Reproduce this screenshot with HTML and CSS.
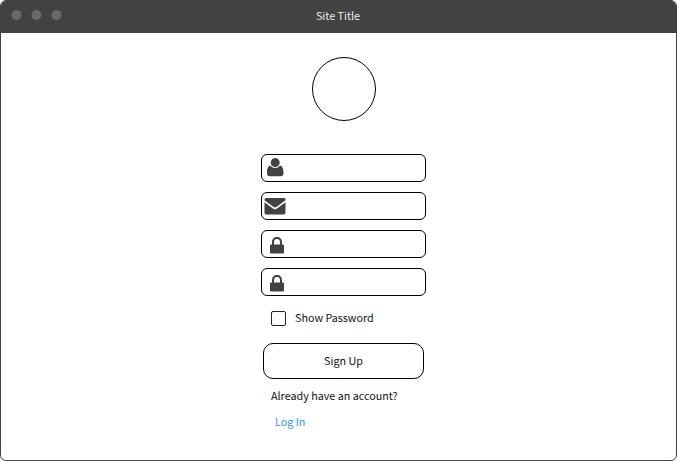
FILE: index.html
```html
<!DOCTYPE html>
<html lang="en">
<head>
<meta charset="utf-8">
<title>Site Title</title>
<link rel="stylesheet" href="styles.css">
</head>
<body>
<div class="window">
  <header class="titlebar">
    <svg class="dots" viewBox="0 0 70 32"><circle cx="15.5" cy="14" r="5"/><circle cx="35.5" cy="14" r="5"/><circle cx="55.5" cy="14" r="5"/></svg>
    <h1>Site Title</h1>
  </header>
  <main class="form">
    <div class="avatar"></div>
    <div class="field"><svg class="user" viewBox="0 0 17 19"><circle cx="8.2" cy="4.6" r="4.5"/><path d="M3.7 7.6Q8.2 12.1 12.7 7.6C15.6 7.9 16.5 11 16.5 15.2Q16.5 18.2 13.8 18.2H2.7Q0 18.2 0 15.2C0 11 .8 7.9 3.7 7.6Z"/><path class="gap" d="M3.3 7.4Q8.2 12.1 13.1 7.4"/></svg></div>
    <div class="field"><svg class="mail" viewBox="0 0 22 17"><path d="M2 0H20Q21.5 0 21.5 1.5V2.3L12.4 8.9Q11 9.8 9.6 8.9L.5 2.3V1.5Q.5 0 2 0ZM.5 4.3 9.3 10.7Q11 11.8 12.7 10.7L21.5 4.3V14.7Q21.5 16.5 19.7 16.5H2.3Q.5 16.5 .5 14.7Z"/></svg></div>
    <div class="field"><svg class="lock" viewBox="0 0 14 17"><path d="M1 7.5H2V5.2C2 2 4 0 7 0S12 2 12 5.2V7.5H13Q14 7.5 14 8.5V15.5Q14 16.5 13 16.5H1Q0 16.5 0 15.5V8.5Q0 7.5 1 7.5ZM4 7.5H10V5.2C10 3.1 8.8 2 7 2S4 3.1 4 5.2Z"/></svg></div>
    <div class="field"><svg class="lock" viewBox="0 0 14 17"><path d="M1 7.5H2V5.2C2 2 4 0 7 0S12 2 12 5.2V7.5H13Q14 7.5 14 8.5V15.5Q14 16.5 13 16.5H1Q0 16.5 0 15.5V8.5Q0 7.5 1 7.5ZM4 7.5H10V5.2C10 3.1 8.8 2 7 2S4 3.1 4 5.2Z"/></svg></div>
    <label class="check"><span class="box"></span>Show Password</label>
    <button class="submit">Sign Up</button>
    <p class="hint">Already have an account?</p>
    <a class="login">Log In</a>
  </main>
</div>
</body>
</html>
```
FILE: styles.css
```css
* { box-sizing: border-box; }
body {
  margin: 0;
  background: #fff;
  color: #111;
  font: 10.75px/16px "Noto Sans CJK SC", sans-serif;
}
.window {
  width: 677px;
  height: 461px;
  border: 1px solid #424242;
  border-radius: 6px;
  overflow: hidden;
}
.titlebar {
  display: grid;
  grid-template-columns: 1fr auto 1fr;
  height: 32px;
  background: #424242;
  color: #eee;
}
.dots { width: 70px; height: 32px; fill: #696969; }
h1 { margin: 7px 0 0 -1px; font: inherit; }
.form { width: 165px; margin-left: 260px; }
.avatar {
  width: 64px;
  height: 64px;
  margin: 24px 0 33px 51px;
  border: 1px solid #000;
  border-radius: 50%;
}
.field {
  height: 28px;
  margin-bottom: 10px;
  border: 1px solid #000;
  border-radius: 6px;
}
.field svg { display: block; fill: #424242; }
.user { width: 17px; height: 19px; margin: 3px 0 0 5px; }
.user .gap { fill: none; stroke: #fff; stroke-width: .7; }
.mail { width: 22px; height: 17px; margin: 5px 0 0 2px; }
.lock { width: 14px; height: 17px; margin: 6px 0 0 8px; }
.check { display: flex; align-items: center; gap: 9px; height: 16px; margin: 14px 0 0 10px; }
.box { width: 15px; height: 15px; border: 1px solid #222; border-radius: 2px; }
.submit {
  display: block;
  width: 161px;
  height: 36px;
  margin: 17px 0 0 2px;
  padding: 0;
  border: 1px solid #000;
  border-radius: 10px;
  background: #fff;
  color: inherit;
  font: inherit;
}
.hint { margin: 9px 0 0 10px; white-space: nowrap; }
.login { display: block; margin: 10px 0 0 14px; color: #2f96e8; }
```
